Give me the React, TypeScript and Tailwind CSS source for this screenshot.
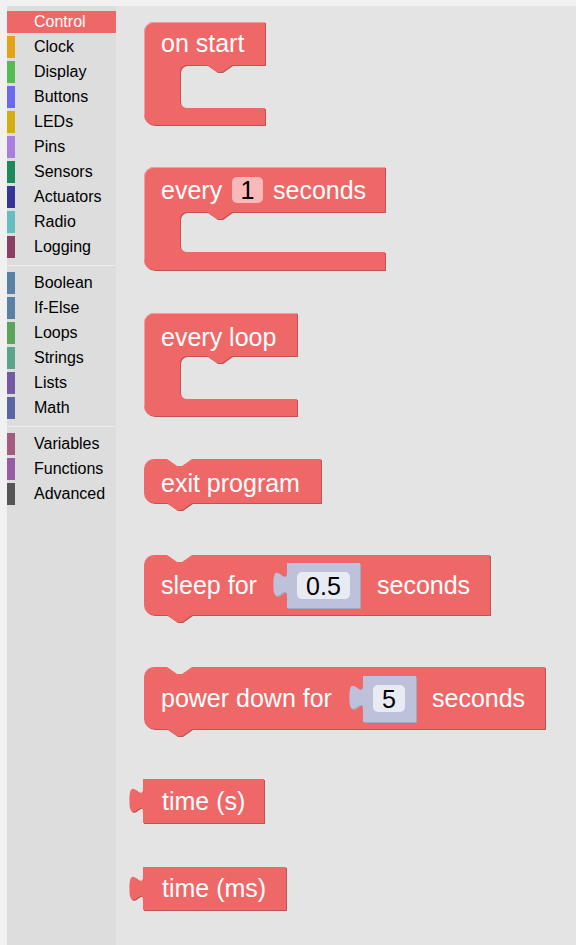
import React from 'react';

type Category = { name: string; strip: string; selected?: boolean };

const groups: Category[][] = [
  [
    { name: 'Control', strip: 'border-[#ef6868]', selected: true },
    { name: 'Clock', strip: 'border-[#e6a117]' },
    { name: 'Display', strip: 'border-[#55bb55]' },
    { name: 'Buttons', strip: 'border-[#6a6af0]' },
    { name: 'LEDs', strip: 'border-[#d4ad14]' },
    { name: 'Pins', strip: 'border-[#a97ee0]' },
    { name: 'Sensors', strip: 'border-[#1e8a5c]' },
    { name: 'Actuators', strip: 'border-[#37349a]' },
    { name: 'Radio', strip: 'border-[#66bfbf]' },
    { name: 'Logging', strip: 'border-[#8b3f63]' },
  ],
  [
    { name: 'Boolean', strip: 'border-[#5b80a5]' },
    { name: 'If-Else', strip: 'border-[#5b80a5]' },
    { name: 'Loops', strip: 'border-[#5ba55b]' },
    { name: 'Strings', strip: 'border-[#5ba58c]' },
    { name: 'Lists', strip: 'border-[#745ba5]' },
    { name: 'Math', strip: 'border-[#5b67a5]' },
  ],
  [
    { name: 'Variables', strip: 'border-[#a55b80]' },
    { name: 'Functions', strip: 'border-[#995ba5]' },
    { name: 'Advanced', strip: 'border-[#555555]' },
  ],
];

const FILL = '#ef6868';
const DARK = '#c25252';
const LIGHT = '#f59c9c';
const SHADOW = '#bdc2da';
const R = 10;
const r = 7;
// puzzle tab drawn upwards along a left edge
const TAB_UP = 'c 0,-17 -13.6,14.45 -13.6,-12.75 s 13.6,4.25 13.6,-12.75';
const NOTCH_R = 'l 10,7 l 5,0 l 10,-7';
const NOTCH_L = 'l -10,7 l -5,0 l -10,-7';

// C-shaped block: top bar, statement gap, bottom arm
const cPath = (x: number, y: number, w: number, h1: number, ix: number, h2: number, y3: number) =>
  `M ${x},${y + R} a ${R},${R} 0 0 1 ${R},${-R} H ${w} V ${h1} H ${ix + 52} ${NOTCH_L} H ${ix + r} ` +
  `a ${r},${r} 0 0 0 ${-r},${r} V ${h2 - r} a ${r},${r} 0 0 0 ${r},${r} H ${w} V ${y3} H ${x + R} ` +
  `a ${R},${R} 0 0 1 ${-R},${-R} Z`;

const stmtPath = (x: number, y: number, w: number, y3: number) =>
  `M ${x},${y + R} a ${R},${R} 0 0 1 ${R},${-R} H ${x + 23} ${NOTCH_R} H ${w} V ${y3} H ${x + 48} ${NOTCH_L} ` +
  `H ${x + R} a ${R},${R} 0 0 1 ${-R},${-R} Z`;

const valuePath = (x: number, y: number, w: number, y3: number) =>
  `M ${x},${y} H ${w} V ${y3} H ${x} V ${y + 34} ${TAB_UP} Z`;

const highlight = (x: number, y: number, w: number, y3: number) =>
  `M ${x + 0.5},${y3 - R} V ${y + R} a ${R - 0.5},${R - 0.5} 0 0 1 ${R - 0.5},${-(R - 0.5)} H ${w - 0.5}`;

const Shape = ({ d, fill = FILL, dark = DARK }: { d: string; fill?: string; dark?: string }) => (
  <>
    <path d={d} fill={dark} transform="translate(1,1)" />
    <path d={d} fill={fill} />
  </>
);

const Label = ({ x, y, children, color = '#ffffff' }: { x: number; y: number; children: React.ReactNode; color?: string }) => (
  <text x={x} y={y} fill={color} fontSize={25}>
    {children}
  </text>
);

const NumberInput = ({ x, y, w, h, fx, fw, value }: { x: number; y: number; w: number; h: number; fx: number; fw: number; value: string }) => (
  <g>
    <Shape d={valuePath(x, y, x + w, y + h)} fill={SHADOW} dark="#a3a8c2" />
    <rect x={fx} y={y + 9} width={fw} height={27} rx={5} fill="#e9ebf4" />
    <text x={fx + fw / 2} y={y + 32} fill="#000000" fontSize={25} textAnchor="middle">
      {value}
    </text>
  </g>
);

const Workspace = () => (
  <svg width="460" height="939" viewBox="116 6 460 939" className="block">
    {/* on start */}
    <Shape d={cPath(144, 22, 265, 65, 180, 108, 125)} />
    <path d={highlight(144, 22, 265, 125)} stroke={LIGHT} fill="none" />
    <Label x={161} y={52}>on start</Label>

    {/* every 1 seconds */}
    <Shape d={cPath(144, 167, 385, 212, 180, 252, 270)} />
    <path d={highlight(144, 167, 385, 270)} stroke={LIGHT} fill="none" />
    <Label x={161} y={199}>every</Label>
    <rect x={232} y={177} width={31} height={26} rx={5} fill="#f8b9b9" />
    <text x={247.5} y={199} fill="#000000" fontSize={25} textAnchor="middle">1</text>
    <Label x={273} y={199}>seconds</Label>

    {/* every loop */}
    <Shape d={cPath(144, 313, 297, 356, 180, 399, 416)} />
    <path d={highlight(144, 313, 297, 416)} stroke={LIGHT} fill="none" />
    <Label x={161} y={346}>every loop</Label>

    {/* exit program */}
    <Shape d={stmtPath(144, 459, 321, 503)} />
    <Label x={161} y={492}>exit program</Label>

    {/* sleep for */}
    <Shape d={stmtPath(144, 555, 490, 615)} />
    <Label x={161} y={594}>sleep for</Label>
    <NumberInput x={287} y={563} w={73} h={45} fx={297} fw={53} value="0.5" />
    <Label x={377} y={594}>seconds</Label>

    {/* power down for */}
    <Shape d={stmtPath(144, 667, 545, 729)} />
    <Label x={161} y={707}>power down for</Label>
    <NumberInput x={363} y={676} w={53} h={46} fx={373} fw={32} value="5" />
    <Label x={432} y={707}>seconds</Label>

    {/* time (s) */}
    <Shape d={valuePath(143, 779, 264, 823)} />
    <Label x={162} y={810}>time (s)</Label>

    {/* time (ms) */}
    <Shape d={valuePath(143, 867, 286, 910)} />
    <Label x={162} y={897}>time (ms)</Label>
  </svg>
);

export default function App() {
  return (
    <div className="flex h-[945px] w-[576px] overflow-hidden bg-[#f1f1f1] pl-[7px] pt-[6px] font-['Liberation_Sans',Arial,sans-serif]">
      <div className="w-[109px] shrink-0 bg-[#dddddd] pt-[5px]">
        {groups.map((group, gi) => (
          <div key={gi}>
            {gi > 0 && <div className="mt-[6px] mb-[6px] h-[2px] border-b border-[#ececec]" />}
            {group.map((c) => (
              <div
                key={c.name}
                className={`mb-[3px] h-[22px] border-l-8 pl-[19px] text-[16px] leading-[22px] ${c.strip} ${
                  c.selected ? 'bg-[#ef6868] text-white' : 'text-black'
                }`}
              >
                {c.name}
              </div>
            ))}
          </div>
        ))}
      </div>
      <div className="flex-1 bg-[#e4e4e4]">
        <Workspace />
      </div>
    </div>
  );
}
